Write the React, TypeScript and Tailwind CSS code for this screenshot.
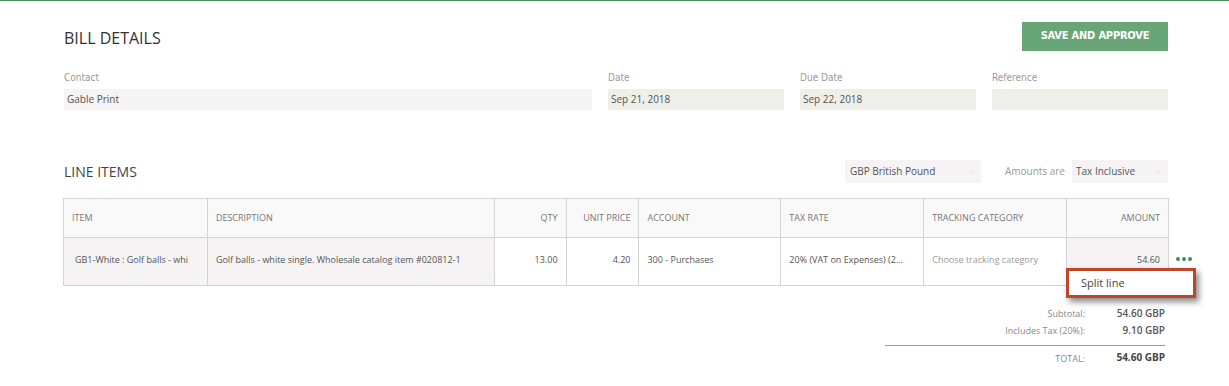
import { ChevronDown } from "lucide-react";

const sans = "font-['Open_Sans',sans-serif]";
const narrow = "font-['Liberation_Sans_Narrow','DejaVu_Sans_Condensed',sans-serif]";

function Field({ label, value, width, tone }: { label: string; value: string; width: string; tone: string }) {
  return (
    <div className={`flex flex-col ${width}`}>
      <span className={`${narrow} text-[10px] leading-[12px] text-[#9a9a9a]`}>{label}</span>
      <div className={`mt-[5px] flex h-[21px] items-center px-[3px] text-[10px] text-[#555] ${tone}`}>{value}</div>
    </div>
  );
}

const cols = [
  { key: "item", label: "ITEM", w: "w-[143px]", align: "text-left" },
  { key: "desc", label: "DESCRIPTION", w: "w-[287px]", align: "text-left" },
  { key: "qty", label: "QTY", w: "w-[72px]", align: "text-right" },
  { key: "price", label: "UNIT PRICE", w: "w-[73px]", align: "text-right" },
  { key: "acct", label: "ACCOUNT", w: "w-[142px]", align: "text-left" },
  { key: "tax", label: "TAX RATE", w: "w-[143px]", align: "text-left" },
  { key: "track", label: "TRACKING CATEGORY", w: "w-[143px]", align: "text-left" },
  { key: "amt", label: "AMOUNT", w: "w-[102px]", align: "text-right" },
];

const row: Record<string, { text: string; bg: string; color?: string }> = {
  item: { text: "GB1-White : Golf balls - whi", bg: "bg-[#f5f3f3]" },
  desc: { text: "Golf balls - white single. Wholesale catalog item #020812-1", bg: "bg-[#f5f3f3]" },
  qty: { text: "13.00", bg: "bg-white" },
  price: { text: "4.20", bg: "bg-white" },
  acct: { text: "300 - Purchases", bg: "bg-white" },
  tax: { text: "20% (VAT on Expenses) (2...", bg: "bg-white" },
  track: { text: "Choose tracking category", bg: "bg-white", color: "text-[#9a9a9a]" },
  amt: { text: "54.60", bg: "bg-[#f5f3f3]" },
};

export default function App() {
  return (
    <div className={`${sans} h-[386px] w-[1229px] overflow-hidden border-t border-[#4a8a5a] bg-white text-[#444]`}>
      <div className="ml-[64px] w-[1104px]">
        <div className="flex items-start justify-between pt-[21px]">
          <h1 className="mt-[5px] text-[16px] leading-[22px] text-[#333]">BILL DETAILS</h1>
          <button
            type="button"
            className={`${narrow} h-[29px] w-[146px] bg-[#68a678] text-[11px] font-bold tracking-[-0.2px] text-white`}
          >
            SAVE AND APPROVE
          </button>
        </div>

        <div className="mt-[21px] flex gap-[16px]">
          <Field label="Contact" value="Gable Print" width="w-[528px]" tone="bg-[#f5f3f3]" />
          <Field label="Date" value="Sep 21, 2018" width="w-[176px]" tone="bg-[#efefea]" />
          <Field label="Due Date" value="Sep 22, 2018" width="w-[176px]" tone="bg-[#efefea]" />
          <Field label="Reference" value="" width="w-[176px]" tone="bg-[#efefea]" />
        </div>

        <div className="mt-[50px] flex items-center">
          <h2 className="flex-1 text-[14px] text-[#444]">LINE ITEMS</h2>
          <div className="flex h-[23px] w-[136px] items-center justify-between bg-[#f5f3f3] pl-[5px] pr-[5px] text-[10px] text-[#555]">
            GBP British Pound
            <ChevronDown className="size-2.5 text-[#e2e0e0]" strokeWidth={2} />
          </div>
          <span className="ml-[24px] mr-[7px] text-[10px] text-[#9a9a9a]">Amounts are</span>
          <div className="flex h-[23px] w-[96px] items-center justify-between bg-[#f5f3f3] pl-[4px] pr-[5px] text-[10px] text-[#555]">
            Tax Inclusive
            <ChevronDown className="size-2.5 text-[#e2e0e0]" strokeWidth={2} />
          </div>
        </div>

        <div className="relative mt-[15px]">
          <div className="-ml-px flex w-[1106px] border border-[#d4d4d4] bg-[#f9f9f9]">
            {cols.map((c, i) => (
              <div
                key={c.key}
                className={`${c.w} flex h-[38px] items-center px-[8px] text-[9px] text-[#777] ${i > 0 ? "border-l border-[#d4d4d4]" : ""} ${c.align === "text-right" ? "justify-end" : ""}`}
              >
                {c.label}
              </div>
            ))}
          </div>
          <div className="-ml-px flex w-[1106px] border border-t-0 border-[#d4d4d4]">
            {cols.map((c, i) => {
              const cell = row[c.key];
              return (
                <div
                  key={c.key}
                  className={`${c.w} ${cell.bg} flex h-[47px] min-w-0 items-center px-[8px] pb-[4px] text-[9px] ${cell.color ?? "text-[#555]"} ${i > 0 ? "border-l border-[#d4d4d4]" : ""} ${c.align === "text-right" ? "justify-end" : ""} ${c.key === "item" ? "pl-[11px]" : ""}`}
                >
                  <span className="whitespace-nowrap">{cell.text}</span>
                </div>
              );
            })}
          </div>

          <div className="absolute left-[1112px] top-[59px] flex gap-[2px]">
            <span className="size-[4px] rounded-full bg-[#4a8a5a]" />
            <span className="size-[4px] rounded-full bg-[#4a8a5a]" />
            <span className="size-[4px] rounded-full bg-[#4a8a5a]" />
          </div>

          <div className="absolute left-[1002px] top-[70px] flex h-[30px] w-[130px] items-center border-[3px] border-[#c0452b] bg-white pl-[12px] text-[11px] text-[#444] shadow-[3px_4px_6px_rgba(0,0,0,0.45)]">
            Split line
          </div>
        </div>

        <div className="ml-auto mr-[3px] mt-[19px] flex w-[280px] flex-col text-[9px]">
          <div className="flex h-[17px] items-center">
            <span className="flex-1 pr-[23px] text-right text-[#888]">Subtotal:</span>
            <span className="w-[57px] text-right text-[10px] font-semibold text-[#555]">54.60 GBP</span>
          </div>
          <div className="flex h-[17px] items-center">
            <span className="flex-1 pr-[23px] text-right text-[#888]">Includes Tax (20%):</span>
            <span className="w-[57px] text-right text-[10px] font-semibold text-[#555]">9.10 GBP</span>
          </div>
          <div className="mt-[6px] border-t border-[#9a9a9a]" />
          <div className="flex h-[19px] items-end">
            <span className="flex-1 pr-[23px] text-right text-[#888]">TOTAL:</span>
            <span className="w-[57px] text-right text-[10px] font-bold text-[#444]">54.60 GBP</span>
          </div>
        </div>
      </div>
    </div>
  );
}
